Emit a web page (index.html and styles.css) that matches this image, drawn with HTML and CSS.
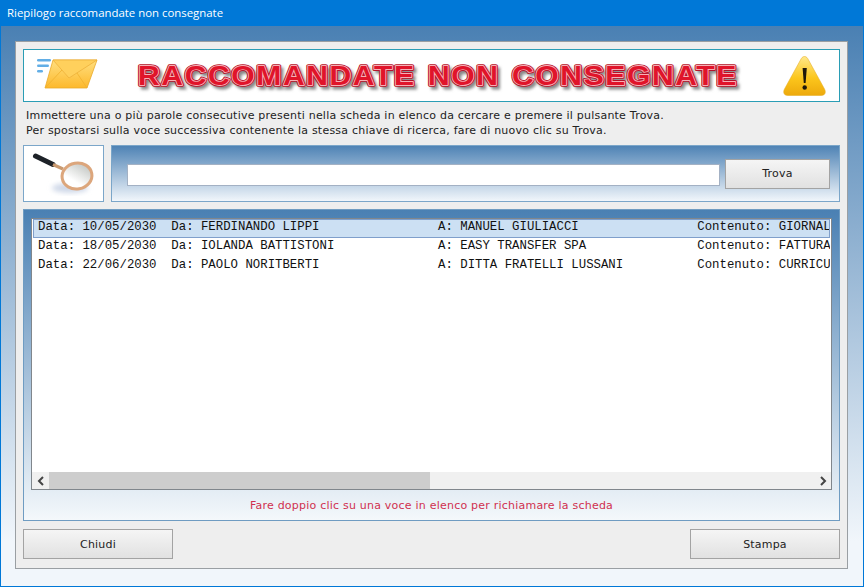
FILE: index.html
```html
<!DOCTYPE html>
<html lang="it">
<head>
    <meta charset="UTF-8">
    <meta name="viewport" content="width=device-width, initial-scale=1.0">
    <title>Riepilogo raccomandate non consegnate</title>
    <link rel="stylesheet" href="styles.css">
</head>
<body>
    <div class="finestra">
        <div class="titolo">Riepilogo raccomandate non consegnate</div>
        <div class="sfondo">
            <div class="pannello">
                <div class="banner">
                    <svg class="ico-busta" width="62" height="32" viewBox="0 0 62 32">
                        <defs>
                            <linearGradient id="gBusta" x1="0" y1="0" x2="0" y2="1">
                                <stop offset="0" stop-color="#ffdf80"/>
                                <stop offset="1" stop-color="#fdb92c"/>
                            </linearGradient>
                        </defs>
                        <g fill="#62aee6">
                            <rect x="1" y="1" width="14" height="2.4" rx="1.2"/>
                            <rect x="1" y="6.5" width="12" height="2.4" rx="1.2"/>
                            <rect x="1" y="12" width="6" height="2.4" rx="1.2"/>
                        </g>
                        <path d="M17 2H61L51 30H9Z" fill="url(#gBusta)" stroke="#eaa92a" stroke-width="0.8"/>
                        <path d="M17 2L33 20L61 2Z" fill="#ffd05c" stroke="#eeb13a" stroke-width="0.8"/>
                        <path d="M9 30L26 12M51 30L41 15" fill="none" stroke="#f0b12f" stroke-width="0.8"/>
                    </svg>
                    <svg class="scritta" width="612" height="38" viewBox="0 0 612 38">
                        <defs>
                            <filter id="ombra" x="-2%" y="-20%" width="104%" height="150%">
                                <feGaussianBlur stdDeviation="1.4"/>
                            </filter>
                            <text id="testoBanner" class="testo-banner" x="6" y="28" textLength="600" lengthAdjust="spacingAndGlyphs">RACCOMANDATE  NON  CONSEGNATE</text>
                        </defs>
                        <use href="#testoBanner" transform="translate(2.5 3)" fill="#888" stroke="#888" stroke-width="3" filter="url(#ombra)"/>
                        <use href="#testoBanner" fill="#b5122a" stroke="#b5122a" stroke-width="3.6" stroke-linejoin="round"/>
                        <use href="#testoBanner" fill="#f6b0b6" stroke="#f6b0b6" stroke-width="1.8" stroke-linejoin="round"/>
                        <use href="#testoBanner" fill="#e0142a"/>
                    </svg>
                    <svg class="ico-avviso" width="44" height="42" viewBox="0 0 44 42">
                        <defs>
                            <linearGradient id="gAvviso" x1="0" y1="0" x2="0" y2="1">
                                <stop offset="0" stop-color="#ffe98a"/>
                                <stop offset="0.55" stop-color="#fcc61c"/>
                                <stop offset="1" stop-color="#eda90c"/>
                            </linearGradient>
                        </defs>
                        <path d="M21.5 2.5C23.5 2.5 24.5 4 25.5 6L41.5 35C43.5 39 41.5 41.5 38 41.5H5C1.5 41.5 -0.5 39 1.5 35L17.5 6C18.5 4 19.5 2.5 21.5 2.5Z" fill="url(#gAvviso)" stroke="#e7b02a" stroke-width="0.6"/>
                        <path d="M19.6 14H23.8L22.6 29H20.8Z" fill="#20180a"/>
                        <circle cx="21.7" cy="33.5" r="2.2" fill="#20180a"/>
                    </svg>
                </div>
                <div class="istruzioni">
                    <p>Immettere una o più parole consecutive presenti nella scheda in elenco da cercare e premere il pulsante Trova.</p>
                    <p>Per spostarsi sulla voce successiva contenente la stessa chiave di ricerca, fare di nuovo clic su Trova.</p>
                </div>
                <div class="ricerca">
                    <div class="box-lente">
                        <svg width="64" height="46" viewBox="0 0 64 46">
                            <defs>
                                <linearGradient id="gVetro" x1="0" y1="1" x2="1" y2="0">
                                    <stop offset="0.35" stop-color="#ffffff"/>
                                    <stop offset="1" stop-color="#b4b8b4"/>
                                </linearGradient>
                                <filter id="sfuma" x="-30%" y="-30%" width="160%" height="160%">
                                    <feGaussianBlur stdDeviation="2.5"/>
                                </filter>
                            </defs>
                            <ellipse cx="38" cy="37" rx="18" ry="5" fill="#cfd8e8" filter="url(#sfuma)"/>
                            <path d="M3.5 5L21 13.5" stroke="#1d2228" stroke-width="5" stroke-linecap="round"/>
                            <path d="M21 13.5L31 18" stroke="#c99a70" stroke-width="3.4"/>
                            <ellipse cx="45" cy="25" rx="15" ry="13" transform="rotate(-10 45 25)" fill="url(#gVetro)" stroke="#dca67c" stroke-width="3"/>
                        </svg>
                    </div>
                    <div class="barra-ricerca">
                        <input class="campo" type="text">
                        <button class="bottone bottone-trova">Trova</button>
                    </div>
                </div>
                <div class="riquadro-lista">
                    <div class="lista">
                        <div class="righe">
                            <div class="riga selezionata">Data: 10/05/2030  Da: FERDINANDO LIPPI                A: MANUEL GIULIACCI                Contenuto: GIORNALI</div>
                            <div class="riga">Data: 18/05/2030  Da: IOLANDA BATTISTONI              A: EASY TRANSFER SPA               Contenuto: FATTURA</div>
                            <div class="riga">Data: 22/06/2030  Da: PAOLO NORITBERTI                A: DITTA FRATELLI LUSSANI          Contenuto: CURRICULUM</div>
                        </div>
                        <div class="scrollbar">
                            <span class="freccia">
                                <svg width="8" height="10" viewBox="0 0 8 10"><path d="M6 1L2 5L6 9" fill="none" stroke="#444" stroke-width="2"/></svg>
                            </span>
                            <div class="traccia"><div class="cursore"></div></div>
                            <span class="freccia">
                                <svg width="8" height="10" viewBox="0 0 8 10"><path d="M2 1L6 5L2 9" fill="none" stroke="#444" stroke-width="2"/></svg>
                            </span>
                        </div>
                    </div>
                    <div class="nota">Fare doppio clic su una voce in elenco per richiamare la scheda</div>
                </div>
                <div class="piede">
                    <button class="bottone bottone-grande">Chiudi</button>
                    <button class="bottone bottone-grande">Stampa</button>
                </div>
            </div>
        </div>
    </div>
</body>
</html>
```

FILE: styles.css
```css
html, body {
    margin: 0;
    height: 100%;
}
body {
    font-family: "DejaVu Sans", Verdana, sans-serif;
    font-size: 11px;
    letter-spacing: 0.22px;
    color: #222;
    overflow: hidden;
}
.finestra {
    width: 864px;
    height: 587px;
    display: flex;
    flex-direction: column;
    box-sizing: border-box;
    border: 1px solid #0078d7;
    border-top: 0;
}
.titolo {
    height: 26px;
    line-height: 26px;
    background: #0078d7;
    color: white;
    font-family: "Open Sans", sans-serif;
    font-size: 11.4px;
    letter-spacing: 0;
    padding-left: 7px;
    flex-shrink: 0;
    margin: 0 -1px;
}
.sfondo {
    flex: 1;
    min-height: 0;
    padding: 15px 15px 17px 14px;
    background: linear-gradient(180deg, #4a80b3 0%, #f1f6fb 92%);
    display: flex;
}
.pannello {
    flex: 1;
    min-width: 0;
    background: #eeeeee;
    border: 1px solid #9a9fa3;
    padding: 7px 7px 9px 7px;
    display: flex;
    flex-direction: column;
}
.banner {
    height: 51px;
    flex-shrink: 0;
    background: white;
    border: 1px solid #2a9db5;
    display: flex;
    align-items: center;
    padding: 0 12px;
}
.ico-busta {
    flex-shrink: 0;
    margin-top: -3px;
}
.scritta {
    flex-shrink: 0;
    margin-left: 34px;
}
.testo-banner {
    font-family: "Liberation Sans", sans-serif;
    font-weight: 700;
    font-size: 28px;
    letter-spacing: 1.5px;
    word-spacing: -3.5px;
    white-space: pre;
}
.ico-avviso {
    flex-shrink: 0;
    margin-left: 39px;
    margin-top: -2px;
}
.istruzioni {
    padding: 6px 3px 0 3px;
    height: 37px;
    flex-shrink: 0;
}
.istruzioni p {
    margin: 0;
    line-height: 15px;
}
.ricerca {
    display: flex;
    gap: 7px;
    height: 57px;
    flex-shrink: 0;
}
.box-lente {
    width: 79px;
    background: white;
    border: 1px solid #7ba6c9;
    display: flex;
    align-items: center;
    justify-content: center;
}
.barra-ricerca {
    flex: 1;
    min-width: 0;
    border: 1px solid #7ba6c9;
    background: linear-gradient(180deg, #4f83b5 0%, #f1f6fb 100%);
    display: flex;
    align-items: center;
    padding: 0 9px 0 15px;
}
.campo {
    flex: 1;
    min-width: 0;
    height: 22px;
    box-sizing: border-box;
    border: 1px solid #a3b1c4;
    background: white;
    margin: 2px 5px 0 0;
    padding: 0;
}
.bottone {
    font-family: "DejaVu Sans", Verdana, sans-serif;
    font-size: 11px;
    letter-spacing: 0.19px;
    color: #222;
    background: linear-gradient(180deg, #f5f5f5, #e1e1e1);
    border: 1px solid #a3a3a3;
    padding: 0;
    border-radius: 0;
}
.bottone-trova {
    width: 105px;
    height: 30px;
    flex-shrink: 0;
}
.riquadro-lista {
    margin-top: 7px;
    height: 312px;
    flex-shrink: 0;
    box-sizing: border-box;
    border: 1px solid #6f9cc2;
    background: linear-gradient(180deg, #4a80b3 0%, #f4f8fb 100%);
    padding: 8px 7px 0 7px;
    display: flex;
    flex-direction: column;
}
.lista {
    height: 272px;
    flex-shrink: 0;
    box-sizing: border-box;
    border: 1px solid #80868c;
    background: white;
    display: flex;
    flex-direction: column;
}
.righe {
    flex: 1;
    min-height: 0;
    padding: 0 1px;
    overflow: hidden;
}
.riga {
    height: 19px;
    line-height: 16px;
    box-sizing: border-box;
    padding-left: 5px;
    font-family: "Liberation Mono", monospace;
    font-size: 12.35px;
    letter-spacing: 0;
    white-space: pre;
    overflow: hidden;
    color: #111;
}
.selezionata {
    background: #cce0f3;
    border: 1px solid #7f9fcb;
    padding-left: 4px;
    line-height: 14px;
}
.scrollbar {
    height: 17px;
    flex-shrink: 0;
    background: #f0f0f0;
    display: flex;
    align-items: center;
}
.freccia {
    width: 17px;
    height: 17px;
    display: flex;
    align-items: center;
    justify-content: center;
    flex-shrink: 0;
}
.traccia {
    flex: 1;
    height: 17px;
}
.cursore {
    width: 381px;
    height: 17px;
    background: #cdcdcd;
}
.nota {
    text-align: center;
    color: #d0304f;
    line-height: 32px;
}
.piede {
    margin-top: 8px;
    display: flex;
    justify-content: space-between;
}
.bottone-grande {
    width: 150px;
    height: 30px;
}
```
